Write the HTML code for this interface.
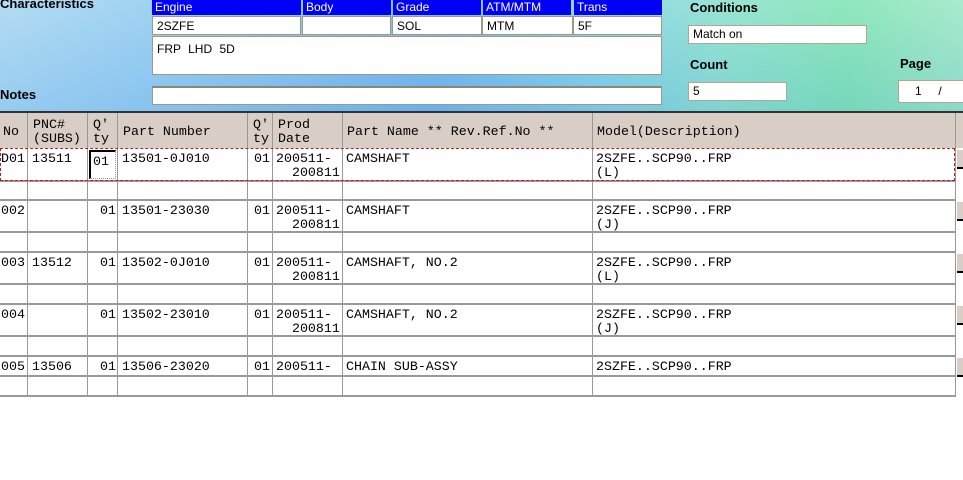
<!DOCTYPE html>
<html><head><meta charset="utf-8">
<style>
*{margin:0;padding:0;box-sizing:border-box}
body{width:963px;height:480px;overflow:hidden;background:#fff;position:relative;font-family:"Liberation Sans",sans-serif}
.top{position:absolute;left:0;top:0;width:963px;height:112px;
background:linear-gradient(90deg,#a6d6f2 0%,#8cc8f0 20%,#6cb4ec 45%,#7fcfe8 62%,#88e0cc 75%,#7ce4b0 88%,#9ae6c4 100%)}
.top2{position:absolute;left:0;top:0;width:963px;height:112px;
background:linear-gradient(180deg,rgba(255,255,255,0.15),rgba(90,160,230,0.2))}
.a{position:absolute;white-space:pre}
.lbl{font-weight:bold;font-size:13px;color:#000}
.bh{background:#0000f4;color:#fff;font-size:12px;padding-left:3px;line-height:15px;height:15px}
.bc{background:#fff;font-size:12px;padding-left:4px;line-height:18px;height:19px;border:1px solid #a09880}
.inp{background:#fff;border:1px solid #b0a888;font-size:12px;padding-left:4px}
.hdr{position:absolute;left:0;top:111px;width:963px;height:37px;background:#d8cec6;border-top:2px solid #333}
.m{font-family:"Liberation Mono",monospace;font-size:13.3px;line-height:14px;color:#000}
.vl{position:absolute;width:1px;background:#999;top:113px;height:283px}
.hl{position:absolute;left:0;width:956px;height:2px;background:#999}
.btn{position:absolute;left:957px;width:6px;height:19px;background:#d8cec6;border-bottom:2px solid #000}
</style></head><body>
<div class="top"></div><div class="top2"></div>
<div class="a lbl" style="left:0;top:-4px">Characteristics</div>
<div class="a lbl" style="left:0;top:87px">Notes</div>

<div class="a bh" style="left:152px;top:0;width:149px">Engine</div>
<div class="a bh" style="left:303px;top:0;width:88px">Body</div>
<div class="a bh" style="left:393px;top:0;width:88px">Grade</div>
<div class="a bh" style="left:483px;top:0;width:88px">ATM/MTM</div>
<div class="a bh" style="left:574px;top:0;width:88px">Trans</div>
<div class="a bc" style="left:152px;top:16px;width:149px">2SZFE</div>
<div class="a bc" style="left:302px;top:16px;width:89px"></div>
<div class="a bc" style="left:392px;top:16px;width:90px">SOL</div>
<div class="a bc" style="left:482px;top:16px;width:91px">MTM</div>
<div class="a bc" style="left:573px;top:16px;width:89px">5F</div>
<div class="a" style="left:152px;top:36px;width:510px;height:39px;background:#fff;border:1px solid #a09880;font-size:12px;padding:5px 0 0 4px;word-spacing:4px">FRP LHD 5D</div>
<div class="a" style="left:152px;top:86px;width:510px;height:19px;background:#fff;border:1px solid #a09880;border-top:2px solid #887"></div>

<div class="a lbl" style="left:690px;top:0px">Conditions</div>
<div class="a inp" style="left:688px;top:25px;width:179px;height:19px;line-height:17px">Match on</div>
<div class="a lbl" style="left:690px;top:57px">Count</div>
<div class="a inp" style="left:688px;top:82px;width:99px;height:19px;line-height:17px">5</div>
<div class="a lbl" style="left:900px;top:56px">Page</div>
<div class="a inp" style="left:898px;top:80px;width:70px;height:23px;line-height:21px;padding-left:16px">1     /</div>

<div class="hdr"></div>
<div class="a m" style="left:3px;top:125px">No</div>
<div class="a m" style="left:33px;top:118px">PNC#
(SUBS)</div>
<div class="a m" style="left:93px;top:118px">Q'
ty</div>
<div class="a m" style="left:123px;top:125px">Part Number</div>
<div class="a m" style="left:253px;top:118px">Q'
ty</div>
<div class="a m" style="left:278px;top:118px">Prod
Date</div>
<div class="a m" style="left:347px;top:125px">Part Name ** Rev.Ref.No **</div>
<div class="a m" style="left:597px;top:125px">Model(Description)</div>

<div class="vl" style="left:27px"></div>
<div class="vl" style="left:87px"></div>
<div class="vl" style="left:117px"></div>
<div class="vl" style="left:247px"></div>
<div class="vl" style="left:272px"></div>
<div class="vl" style="left:342px"></div>
<div class="vl" style="left:592px"></div>
<div class="vl" style="left:955px"></div>

<div class="hl" style="top:180px"></div>
<div class="hl" style="top:199px"></div>
<div class="hl" style="top:231px"></div>
<div class="hl" style="top:251px"></div>
<div class="hl" style="top:283px"></div>
<div class="hl" style="top:303px"></div>
<div class="hl" style="top:335px"></div>
<div class="hl" style="top:355px"></div>
<div class="hl" style="top:375px"></div>
<div class="hl" style="top:395px"></div>
<div class="a" style="left:0;top:148px;width:955px;height:33px;border:1px dashed #c81818;background:transparent"></div>

<div class="btn" style="top:150px"></div>
<div class="btn" style="top:202px"></div>
<div class="btn" style="top:254px"></div>
<div class="btn" style="top:306px"></div>
<div class="btn" style="top:358px"></div>

<!-- row1 -->
<div class="a m" style="left:1px;top:152px">D01</div>
<div class="a m" style="left:32px;top:152px">13511</div>
<div class="a m" style="left:89px;top:150px;width:27px;height:29px;background:#fff;border-left:2px solid #000;border-top:2px solid #000;border-right:1px dotted #999;border-bottom:1px dotted #999;padding:3px 0 0 2px">01</div>
<div class="a m" style="left:122px;top:152px">13501-0J010</div>
<div class="a m" style="left:254px;top:152px">01</div>
<div class="a m" style="left:276px;top:152px">200511-
  200811</div>
<div class="a m" style="left:346px;top:152px">CAMSHAFT</div>
<div class="a m" style="left:596px;top:152px">2SZFE..SCP90..FRP
(L)</div>
<!-- row2 -->
<div class="a m" style="left:1px;top:204px">002</div>
<div class="a m" style="left:100px;top:204px">01</div>
<div class="a m" style="left:122px;top:204px">13501-23030</div>
<div class="a m" style="left:254px;top:204px">01</div>
<div class="a m" style="left:276px;top:204px">200511-
  200811</div>
<div class="a m" style="left:346px;top:204px">CAMSHAFT</div>
<div class="a m" style="left:596px;top:204px">2SZFE..SCP90..FRP
(J)</div>
<!-- row3 -->
<div class="a m" style="left:1px;top:256px">003</div>
<div class="a m" style="left:32px;top:256px">13512</div>
<div class="a m" style="left:100px;top:256px">01</div>
<div class="a m" style="left:122px;top:256px">13502-0J010</div>
<div class="a m" style="left:254px;top:256px">01</div>
<div class="a m" style="left:276px;top:256px">200511-
  200811</div>
<div class="a m" style="left:346px;top:256px">CAMSHAFT, NO.2</div>
<div class="a m" style="left:596px;top:256px">2SZFE..SCP90..FRP
(L)</div>
<!-- row4 -->
<div class="a m" style="left:1px;top:308px">004</div>
<div class="a m" style="left:100px;top:308px">01</div>
<div class="a m" style="left:122px;top:308px">13502-23010</div>
<div class="a m" style="left:254px;top:308px">01</div>
<div class="a m" style="left:276px;top:308px">200511-
  200811</div>
<div class="a m" style="left:346px;top:308px">CAMSHAFT, NO.2</div>
<div class="a m" style="left:596px;top:308px">2SZFE..SCP90..FRP
(J)</div>
<!-- row5 -->
<div class="a m" style="left:1px;top:360px">005</div>
<div class="a m" style="left:32px;top:360px">13506</div>
<div class="a m" style="left:100px;top:360px">01</div>
<div class="a m" style="left:122px;top:360px">13506-23020</div>
<div class="a m" style="left:254px;top:360px">01</div>
<div class="a m" style="left:276px;top:360px">200511-</div>
<div class="a m" style="left:346px;top:360px">CHAIN SUB-ASSY</div>
<div class="a m" style="left:596px;top:360px">2SZFE..SCP90..FRP</div>
</body></html>
